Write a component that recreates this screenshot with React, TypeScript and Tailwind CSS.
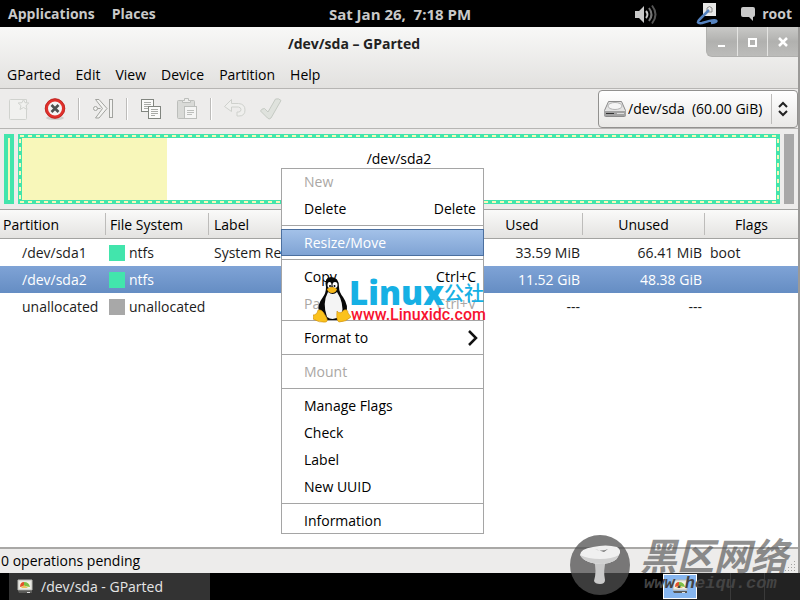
import type { ReactNode } from "react";

const menus = ["GParted", "Edit", "View", "Device", "Partition", "Help"];

function NewIcon() {
  return (
    <svg width="22" height="22" viewBox="0 0 22 22" fill="#f1f1ef" stroke="#d0d2ce">
      <path d="M1.500 2.500q0-1 1-1h16v19q0 1-1 1h-15q-1 0-1-1z" />
      <path d="M15.500 1.500l1.500 3.200 3.800.300-2.800 2.600 1 3.900-3.500-2-3.500 2 1-3.900-2.800-2.600 3.800-.300z" />
    </svg>
  );
}

function DeleteIcon() {
  return (
    <svg width="22" height="22" viewBox="0 0 22 22" fill="none">
      <ellipse cx="11" cy="20" rx="9" ry="2" fill="#cfcfcd" />
      <circle cx="11" cy="10.500" r="8.500" fill="#f4f4f4" stroke="#e0312c" strokeWidth="3" />
      <circle cx="11" cy="10.500" r="9.800" stroke="#b81c18" strokeWidth=".8" />
      <path d="M7.500 7l7 7M14.500 7l-7 7" stroke="#4d5150" strokeWidth="2.600" />
    </svg>
  );
}

function ResizeIcon() {
  return (
    <svg width="22" height="22" viewBox="0 0 22 22" fill="#f3f3f1" stroke="#a2a39f">
      <path d="M3.500 1.500h3.500l8 9-8 9.500h-3.500l7-9.500z" />
      <circle cx="3.500" cy="10.500" r="2" />
      <path d="M5.500 10.500h3" />
      <rect x="17.500" y="1.500" width="3" height="18" />
    </svg>
  );
}

function CopyIcon() {
  return (
    <svg width="22" height="22" viewBox="0 0 22 22" fill="#fbfbfa" stroke="#81857f">
      <rect x="1.500" y="1.500" width="12" height="12" />
      <path d="M4 4.500h7M4 6.500h7M4 8.500h7M4 10.500h4" stroke="#a9aba7" />
      <rect x="8.500" y="8.500" width="12" height="12" />
      <path d="M11 11.500h7M11 13.500h7M11 15.500h7M11 17.500h4" stroke="#a9aba7" />
    </svg>
  );
}

function PasteIcon() {
  return (
    <svg width="22" height="22" viewBox="0 0 22 22" stroke="#bcbebb">
      <rect x="1.500" y="2.500" width="17" height="18" rx="1" fill="#d9dad7" />
      <path d="M6.500 4.500v-2h2v-2h4v2h2v2z" fill="#eeeeec" />
      <rect x="8.500" y="8.500" width="12" height="12" fill="#f5f5f4" />
      <path d="M11 12.500h7M11 14.500h7M11 16.500h5" />
    </svg>
  );
}

function UndoIcon() {
  return (
    <svg width="22" height="22" viewBox="0 0 22 22" fill="#efefed" stroke="#cfd1cd">
      <path d="M.500 8.500l7-7v4h7q6.500.500 6.500 6.500t-6 6h-2v-4h2q2-.500 2-2.500t-2.500-2.500h-7v4.500z" />
    </svg>
  );
}

function ApplyIcon() {
  return (
    <svg width="24" height="24" viewBox="0 0 24 24" fill="#dfe2dd" stroke="#c5cac3">
      <path d="M1.500 14q1-2.500 4-2.500l3.500 3.500 7.500-13q3.500-1 5.500 1.500l-10 17.500q-2 2-3.500 0z" />
    </svg>
  );
}

function DriveIcon() {
  return (
    <svg width="24" height="18" viewBox="0 0 24 18" className="pointer-events-none absolute left-1">
      <path d="M5.500 1.500h13l4 9v5q0 1-1 1h-19q-1 0-1-1v-5z" fill="#e3e3e3" stroke="#8b8b8b" />
      <ellipse cx="12" cy="6" rx="7" ry="3.500" fill="#f5f5f5" stroke="#b3b3b3" />
      <path d="M1 11h22v5H1z" fill="#a2a2a2" />
      <path d="M3 13.500h8" stroke="#333" />
      <path d="M14 13.500h7" stroke="#ddd" />
    </svg>
  );
}

function GPartedIcon() {
  return (
    <svg width="16" height="15" viewBox="0 0 16 15">
      <path d="M1 1h14v10H1z" fill="#e9e9e4" stroke="#b9b9b4" />
      <path d="M3 3h10v6H3z" fill="#f8f4e0" />
      <path d="M3 8q0-5 4-5v4z" fill="#e2502b" />
      <path d="M7 3q5 0 6 5l-6-1z" fill="#7dbf45" />
      <path d="M4 9h7L7 6z" fill="#ecc25a" />
      <path d="M1 12h14v2H2z" fill="#5a5a58" />
      <path d="M10 13.500h3" stroke="#ddd" />
    </svg>
  );
}

type ToolProps = { label: string; disabled?: boolean; children: ReactNode };

function Tool({ label, disabled, children }: ToolProps) {
  return (
    <button type="button" aria-label={label} disabled={disabled} className="flex size-9 items-center justify-center">
      {children}
    </button>
  );
}

function ToolDivider() {
  return <span className="mx-[5px] h-[22px] w-0.5 border-l border-[#bdbcba] bg-white" />;
}

type Entry = { text: string; keys?: string; off?: boolean; active?: boolean; sub?: boolean };

const groups: Entry[][] = [
  [{ text: "New", off: true }, { text: "Delete", keys: "Delete" }],
  [{ text: "Resize/Move", active: true }],
  [{ text: "Copy", keys: "Ctrl+C" }, { text: "Paste", keys: "Ctrl+V", off: true }],
  [{ text: "Format to", sub: true }],
  [{ text: "Mount", off: true }],
  [{ text: "Manage Flags" }, { text: "Check" }, { text: "Label" }, { text: "New UUID" }],
  [{ text: "Information" }],
];

function entryClass(e: Entry) {
  if (e.active) return "bg-linear-to-b from-[#a4c2e9] to-[#7ea2d3] text-white ring-1 ring-[#4b6f9f] ring-inset";
  return e.off ? "text-[#aaa7a4]" : "text-black";
}

function ContextMenu() {
  return (
    <div role="menu" className="absolute top-[168px] left-[281px] w-[203px] bg-white ring-1 ring-[#a5a5a5] ring-inset">
      {groups.map((group, i) => (
        <div key={i}>
          {i > 0 && <div role="separator" className="my-[3px] h-px bg-[#a5a5a5]" />}
          {group.map((e) => (
            <button
              key={e.text}
              type="button"
              role="menuitem"
              disabled={e.off}
              className={`flex h-[27px] w-full items-center justify-between pr-2 pl-[23px] ${entryClass(e)}`}
            >
              <span>{e.text}</span>
              {e.keys && <span>{e.keys}</span>}
              {e.sub && (
                <svg width="10" height="16" viewBox="0 0 10 16" fill="none" stroke="#111" strokeWidth="2.500" className="-mr-0.5">
                  <path d="M1 1l7 7-7 7" />
                </svg>
              )}
            </button>
          ))}
        </div>
      ))}
    </div>
  );
}

const rows = [
  { part: "/dev/sda1", fs: "ntfs", label: "System Reserved", size: "100.00 MiB", used: "33.59 MiB", unused: "66.41 MiB", flags: "boot" },
  { part: "/dev/sda2", fs: "ntfs", label: "", size: "59.90 GiB", used: "11.52 GiB", unused: "48.38 GiB", flags: "", selected: true },
  { part: "unallocated", fs: "unallocated", label: "", size: "1.00 MiB", used: "---", unused: "---", flags: "" },
];

const columns = [
  { name: "Partition", style: "w-[106px] text-left", pad: "pl-[3px]" },
  { name: "File System", style: "w-[103px] text-left", pad: "pl-1" },
  { name: "Label", style: "text-left", pad: "pl-[5px]" },
  { name: "Size", style: "w-[121px] text-center", pad: "" },
  { name: "Used", style: "w-[121px] text-center", pad: "" },
  { name: "Unused", style: "w-[122px] text-center", pad: "" },
  { name: "Flags", style: "w-[93px] text-center", pad: "" },
];

function PartitionTable() {
  return (
    <table className="w-full table-fixed border-collapse">
      <thead>
        <tr className="h-[30px] bg-linear-to-b from-[#fbfbfa] to-[#e3e2e0] shadow-[inset_0_1px_#a3a3a1,inset_0_-1px_#a3a3a1]">
          {columns.map((c, i) => (
            <th key={c.name} className={`p-0 font-normal ${c.style}`}>
              <div className={`h-[22px] leading-6 ${c.pad} ${i < 6 ? "border-r border-[#bdbcba]" : ""}`}>{c.name}</div>
            </th>
          ))}
        </tr>
      </thead>
      <tbody>
        {rows.map((r) => (
          <tr
            key={r.part}
            className={`h-[27px] whitespace-nowrap ${r.selected ? "bg-linear-to-b from-[#7fa3d6] to-[#658dc3] text-white" : "text-[#1c1c1c]"}`}
          >
            <td className="p-0 pl-[22px]">{r.part}</td>
            <td className="p-0 pl-[3px]">
              <span className="flex items-center gap-1">
                <span className={`size-4 shrink-0 ${r.fs === "ntfs" ? "bg-[#42e5ac]" : "bg-[#a8a8a8]"}`} />
                {r.fs}
              </span>
            </td>
            <td className="p-0 pl-[5px]">{r.label}</td>
            <td className="p-0 pr-1 text-right">{r.size}</td>
            <td className="p-0 pr-[3px] text-right">{r.used}</td>
            <td className="p-0 pr-[3px] text-right">{r.unused}</td>
            <td className="p-0 pl-[5px]">{r.flags}</td>
          </tr>
        ))}
      </tbody>
    </table>
  );
}

function DiskMap() {
  return (
    <div className="flex h-20 gap-1 px-1 py-[5px]">
      <div className="w-2.5 border-4 border-[#42e5ac] bg-[#f8f7ba]" />
      <div className="relative flex flex-1 border-4 border-[#42e5ac] bg-white">
        <svg className="absolute -top-1 -left-1 h-[70px] w-[calc(100%+8px)]" fill="none" stroke="#f8f7ba" strokeWidth="2" strokeDasharray="4 4">
          <line x1="2" y1="2" x2="100%" y2="2" />
          <line x1="2" y1="68" x2="100%" y2="68" />
          <line x1="2" y1="5" x2="2" y2="66" />
          <svg x="100%" overflow="visible">
            <line x1="-2" y1="5" x2="-2" y2="66" />
          </svg>
        </svg>
        <div className="w-[145px] bg-[#f8f7ba]" />
        <span className="absolute inset-x-0 top-[11px] text-center">/dev/sda2</span>
      </div>
      <div className="w-2.5 bg-[#a8a8a8]" />
    </div>
  );
}

function WindowButtons() {
  return (
    <div className="absolute top-0 right-0 flex h-[30px] w-[92px] divide-x divide-[#e4e4e2] overflow-hidden rounded-bl-md border-b border-l border-[#b0b0ae] bg-linear-to-b from-[#c9c9c7] via-[#b1b1af] to-[#bcbcba]">
      <button type="button" aria-label="Minimize" className="flex flex-1 items-center justify-center">
        <svg width="12" height="12" fill="none" stroke="#fff" strokeWidth="2"><path d="M2 10h7" /></svg>
      </button>
      <button type="button" aria-label="Maximize" className="flex flex-1 items-center justify-center">
        <svg width="12" height="12" fill="none" stroke="#fff" strokeWidth="2"><path d="M2 3h7v7H2z" /></svg>
      </button>
      <button type="button" aria-label="Close" className="flex flex-1 items-center justify-center">
        <svg width="12" height="12" fill="none" stroke="#fff" strokeWidth="2.500"><path d="M2 2l8 8M10 2l-8 8" /></svg>
      </button>
    </div>
  );
}

function TopPanel() {
  return (
    <header className="relative flex h-[27px] items-center bg-black px-2 font-bold text-[#c9c9c9]">
      <button type="button">Applications</button>
      <button type="button" className="ml-[17px]">Places</button>
      <time className="absolute inset-x-0 text-center text-[15px]">Sat Jan 26, &nbsp;7:18 PM</time>
      <div className="relative ml-auto flex items-center">
        <svg width="24" height="22" viewBox="0 0 24 22" fill="none" strokeWidth="2">
          <path d="M1 8h4l5-5v17l-5-5H1z" fill="#c9c9c9" />
          <path d="M12 8q3 3.500 0 7" stroke="#c9c9c9" />
          <path d="M15 5q5 6.500 0 13" stroke="#777" />
          <path d="M18 2.500q7 9 0 18" stroke="#555" />
        </svg>
        <svg width="24" height="22" viewBox="0 0 24 22" fill="none" className="ml-[38px]">
          <path d="M7 0h13v13H7z" fill="#e8e8e6" />
          <path d="M11 9V5q2.500-3 5 0v4z" stroke="#8a8a88" />
          <path d="M13 7L4 16q-5 5 2 4 12-4 14-2.500t-5 2.500" stroke="#5583c0" strokeWidth="2.500" />
        </svg>
        <svg width="16" height="16" viewBox="0 0 16 16" fill="#c9c9c9" className="ml-5">
          <path d="M3 1h10q2 0 2 2v6q0 2-2 2v4l-4-4H3q-2 0-2-2V3q0-2 2-2z" />
        </svg>
        <button type="button" className="ml-1.5">root</button>
      </div>
    </header>
  );
}

function LinuxMark() {
  return (
    <div className="pointer-events-none absolute top-[277px] left-[313px] flex">
      <svg width="38" height="46" viewBox="0 0 38 46">
        <path d="M18 0q8 0 8 10 0 5 4 10 6 9 3 16l-8 7H11l-5-9q-2-6 4-14 3-4 3-10Q11 0 18 0z" fill="#080808" />
        <path d="M15 15q5 4 9 0 7 11 5 22-8 8-15 3-5-14 1-25z" fill="#f4f4f4" />
        <ellipse cx="16.500" cy="8" rx="2" ry="3" fill="#fff" />
        <ellipse cx="22" cy="8" rx="2.500" ry="3" fill="#fff" />
        <circle cx="17" cy="9" r="1" />
        <circle cx="21.500" cy="9" r="1" />
        <path d="M14 12q5-4 10 0-1 4-5 4t-5-4z" fill="#f6b719" />
        <path d="M0 38q4 0 5-5 4-1 7 5 4 6 1 7-7 1-13-3 1-3 0-4z" fill="#fbc21c" stroke="#c98c10" strokeWidth=".6" />
        <path d="M24 34q3 4 7-1 4-1 4 3l3 4q-5 5-12 5-3-1-2-11z" fill="#fbc21c" stroke="#c98c10" strokeWidth=".6" />
      </svg>
      <div className="whitespace-nowrap">
        <div className="flex h-[30px] items-end text-[#16b0e4]">
          <span className="-ml-0.5 font-['Open_Sans',sans-serif] text-[33px] leading-7 font-extrabold">Linux</span>
          <span className="font-['Noto_Sans_CJK_SC',sans-serif] text-[20px] leading-7 font-medium">公社</span>
        </div>
        <div className="font-['Roboto',sans-serif] text-[16px] leading-4 font-medium text-[#f8122f]">www.Linuxidc.com</div>
      </div>
    </div>
  );
}

function MushroomMark() {
  return (
    <div className="pointer-events-none absolute right-3 bottom-1 flex gap-3">
      <svg width="60" height="62" viewBox="0 0 60 62">
        <circle cx="30" cy="31" r="30" fill="#505050" fillOpacity=".75" />
        <path d="M24 26h12q-3 11-1 20 0 4-5 4t-6-3q3-10 0-21z" fill="#c9c9c9" />
        <path d="M10 21q0-6 13-8 13-3 24 0 5 3 2 8-3 8-16 9-18 0-23-9z" fill="#f0f0f0" />
        <path d="M10 21q8 4 20 4t19-4q-3 8-16 9-18 0-23-9z" fill="#d0d0d0" />
        <path d="M25 15q6 3 13 0l-4 3z" fill="#777" />
      </svg>
      <div className="-ml-0.5 whitespace-nowrap italic">
        <div className="font-['Noto_Sans_CJK_SC',sans-serif] text-[37px] leading-10 font-bold text-[#555] opacity-65">黑区网络</div>
        <div className="pl-1 font-['Liberation_Mono',monospace] text-[17px] leading-5 font-bold text-[#444]">www.heiqu.com</div>
      </div>
    </div>
  );
}

export default function App() {
  return (
    <div className="relative flex min-h-screen flex-col overflow-hidden bg-[#9b9a98] font-['Open_Sans','Noto_Sans',sans-serif] text-[14px] leading-5 text-black">
      <TopPanel />
      <main className="mr-0.5 flex flex-1 flex-col bg-[#edeceb]">
        <div className="relative border-b border-[#b6b5b3] bg-linear-to-b from-[#f8f8f7] to-[#e2e1df]">
          <h1 className="h-[34px] pr-[90px] text-center leading-[34px] font-bold text-[#222]">/dev/sda – GParted</h1>
          <WindowButtons />
          <nav className="flex h-[27px] items-center gap-[15px] px-[7px]">
            {menus.map((m) => (
              <button key={m} type="button">{m}</button>
            ))}
          </nav>
        </div>
        <div className="flex h-10 items-center border-b border-[#b6b5b3] pl-px">
          <Tool label="New" disabled><NewIcon /></Tool>
          <Tool label="Delete"><DeleteIcon /></Tool>
          <ToolDivider />
          <Tool label="Resize/Move"><ResizeIcon /></Tool>
          <ToolDivider />
          <Tool label="Copy"><CopyIcon /></Tool>
          <Tool label="Paste" disabled><PasteIcon /></Tool>
          <ToolDivider />
          <Tool label="Undo" disabled><UndoIcon /></Tool>
          <Tool label="Apply" disabled><ApplyIcon /></Tool>
          <div className="relative ml-auto flex h-[38px] w-[200px] items-center rounded border border-[#92918f] bg-linear-to-b from-white to-[#e9e8e6]">
            <DriveIcon />
            <select aria-label="Device" className="h-full w-full appearance-none bg-transparent pl-[29px] outline-none">
              <option>/dev/sda &nbsp;(60.00 GiB)</option>
            </select>
            <span className="pointer-events-none absolute right-0 flex h-[30px] w-[26px] items-center justify-center border-l border-[#bdbcba]">
              <svg width="10" height="16" viewBox="0 0 10 16" fill="none" stroke="#222" strokeWidth="2" className="mr-1">
                <path d="M1 6l4-4 4 4M1 10l4 4 4-4" />
              </svg>
            </span>
          </div>
        </div>
        <DiskMap />
        <div className="flex-1 bg-white">
          <PartitionTable />
        </div>
        <div className="flex h-[26px] items-end justify-between border-t-2 border-[#a9a8a6] px-px">
          <p className="leading-6">0 operations pending</p>
          <svg width="12" height="13" viewBox="0 0 12 13" stroke="#a3a2a0" strokeDasharray="1 2">
            <path d="M9 1.500h2M6 4.500h5M3 7.500h8M0 10.500h11" />
          </svg>
        </div>
      </main>
      <footer className="flex h-[27px] bg-black pl-[9px] text-[#e6e6e6]">
        <button type="button" className="flex w-[201px] items-center gap-2 bg-[#333] pl-2">
          <GPartedIcon />
          /dev/sda - GParted
        </button>
        <div className="ml-auto flex w-[137px] divide-x divide-[#3a3a3a] bg-[#222]">
          <button type="button" aria-label="Workspace 1" className="my-px flex w-[34px] items-center justify-center border border-white bg-[#86b6f0]">
            <GPartedIcon />
          </button>
          <button type="button" aria-label="Workspace 2" className="w-[34px]" />
          <button type="button" aria-label="Workspace 3" className="w-[34px]" />
          <button type="button" aria-label="Workspace 4" className="flex-1" />
        </div>
      </footer>
      <ContextMenu />
      <LinuxMark />
      <MushroomMark />
    </div>
  );
}
